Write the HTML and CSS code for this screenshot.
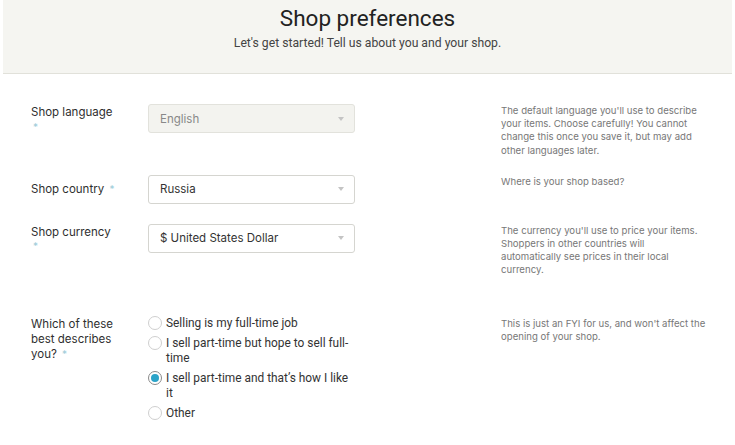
FILE: index.html
```html
<!DOCTYPE html>
<html lang="en">
<head>
<meta charset="utf-8">
<title>Shop preferences</title>
<link rel="stylesheet" href="styles.css">
</head>
<body>
<header class="hero">
  <h1 class="hero-title">Shop preferences</h1>
  <p class="hero-sub">Let's get started! Tell us about you and your shop.</p>
</header>
<main class="form">
  <div class="row row-lang">
    <label class="label">Shop language <span class="req">*</span></label>
    <div class="field">
      <div class="select select-disabled"><span>English</span><i class="caret"></i></div>
    </div>
    <p class="help">The default language you'll use to describe your items. Choose carefully! You cannot change this once you save it, but may add other languages later.</p>
  </div>
  <div class="row row-country">
    <label class="label">Shop country <span class="req">*</span></label>
    <div class="field">
      <div class="select"><span>Russia</span><i class="caret"></i></div>
    </div>
    <p class="help">Where is your shop based?</p>
  </div>
  <div class="row row-currency">
    <label class="label">Shop currency <span class="req">*</span></label>
    <div class="field">
      <div class="select"><span>$ United States Dollar</span><i class="caret"></i></div>
    </div>
    <p class="help">The currency you'll use to price your items. Shoppers in other countries will automatically see prices in their local currency.</p>
  </div>
  <div class="row row-desc">
    <label class="label">Which of these best describes you? <span class="req">*</span></label>
    <div class="field radios">
      <div class="radio"><span class="dot"></span><span class="rtext">Selling is my full-time job</span></div>
      <div class="radio"><span class="dot"></span><span class="rtext">I sell part-time but hope to sell full-time</span></div>
      <div class="radio"><span class="dot checked"></span><span class="rtext">I sell part-time and that’s how I like it</span></div>
      <div class="radio"><span class="dot"></span><span class="rtext">Other</span></div>
    </div>
    <p class="help">This is just an FYI for us, and won't affect the opening of your shop.</p>
  </div>
</main>
</body>
</html>
```
FILE: styles.css
```css
* { box-sizing: border-box; }
html, body { margin: 0; padding: 0; background: #fff; }
body {
  font-family: "Inter", "Roboto", "Liberation Sans", sans-serif;
  color: #333;
  width: 735px;
  height: 445px;
  overflow: hidden;
}
.hero {
  margin: 0 3px;
  height: 74px;
  background: #f5f5f1;
  border-bottom: 1px solid #e1e1da;
  text-align: center;
  padding-top: 5px;
}
.hero-title {
  margin: 0;
  font-family: "Roboto", sans-serif;
  font-weight: 400;
  font-size: 22.5px;
  line-height: 27px;
  color: #222;
}
.hero-sub {
  margin: 4px 0 0;
  font-family: "Roboto", sans-serif;
  font-size: 12.2px;
  line-height: 15px;
  color: #444;
}
.form {
  padding: 30px 0 0 31px;
}
.row {
  display: grid;
  grid-template-columns: 117px 207px 146px 206px;
  grid-template-areas: "label field gap help";
  align-items: start;
}
.label { grid-area: label; font-size: 11.5px; line-height: 14.5px; color: #2f2f2f; width: 85px; padding-top: 1px; }
.field { grid-area: field; }
.help { grid-area: help; margin: 0; font-size: 9.6px; line-height: 13.2px; color: #777; padding-top: 0; }
.req { display: inline-block; margin-left: 2px; color: #9ccbd8; font-size: 10px; line-height: 1; }
.row-country { margin-top: 18px; }
.row-country .label { padding-top: 7px; }
.row-currency { margin-top: 20px; }
.row-desc { margin-top: 38px; }
.row-desc .label { padding-top: 2px; line-height: 15px; }
.row-desc .help { padding-top: 2px; }
.select {
  height: 29px;
  border: 1px solid #d5d5d0;
  border-radius: 3px;
  background: #fff;
  display: flex;
  align-items: center;
  justify-content: space-between;
  padding: 0 10px 0 11px;
  font-size: 11.5px;
  color: #333;
}
.select-disabled { background: #f3f3ef; color: #888; border-color: #e2e2dc; }
.caret {
  width: 0; height: 0;
  border-left: 3.5px solid transparent;
  border-right: 3.5px solid transparent;
  border-top: 4px solid #c4c4c4;
}
.radios { display: flex; flex-direction: column; gap: 5px; padding-top: 1px; }
.radio { display: flex; align-items: flex-start; font-family: "Roboto", sans-serif; font-size: 11.9px; line-height: 15px; color: #333; }
.dot {
  flex: none;
  width: 14px; height: 14px;
  margin-top: 0.5px;
  margin-right: 4px;
  border-radius: 50%;
  border: 1px solid #cfcfcf;
  background: #fff;
  position: relative;
}
.dot.checked { border-color: #8a8a8a; }
.dot.checked::after {
  content: "";
  position: absolute;
  left: 2px; top: 2px;
  width: 8px; height: 8px;
  border-radius: 50%;
  background: #2ba3c8;
}
.rtext { width: 188px; }
```
